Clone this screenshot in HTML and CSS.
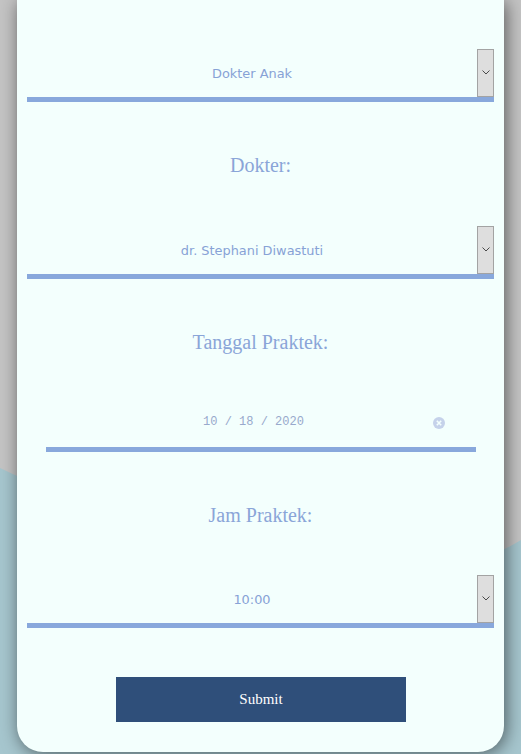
FILE: index.html
```html
<!DOCTYPE html>
<html lang="id">
<head>
<meta charset="utf-8">
<title>Form Janji Dokter</title>
<link rel="stylesheet" href="styles.css">
</head>
<body>
<div class="page">
  <form class="card">
    <div class="select">
      <span class="select-value">Dokter Anak</span>
      <span class="select-btn"><svg width="8" height="5" viewBox="0 0 8 5"><path d="M0.5 0.5 L4 4 L7.5 0.5" fill="none" stroke="#4a4a4a" stroke-width="1"/></svg></span>
    </div>

    <label class="label">Dokter:</label>
    <div class="select">
      <span class="select-value">dr. Stephani Diwastuti</span>
      <span class="select-btn"><svg width="8" height="5" viewBox="0 0 8 5"><path d="M0.5 0.5 L4 4 L7.5 0.5" fill="none" stroke="#4a4a4a" stroke-width="1"/></svg></span>
    </div>

    <label class="label">Tanggal Praktek:</label>
    <div class="date">
      <span class="date-value">10 / 18 / 2020</span>
      <span class="date-clear"><svg width="12" height="12" viewBox="0 0 12 12"><circle cx="6" cy="6" r="6" fill="#c5d2ea"/><path d="M3.8 3.8 L8.2 8.2 M8.2 3.8 L3.8 8.2" stroke="#f3fffd" stroke-width="1.6"/></svg></span>
    </div>

    <label class="label label-jam">Jam Praktek:</label>
    <div class="select">
      <span class="select-value">10:00</span>
      <span class="select-btn"><svg width="8" height="5" viewBox="0 0 8 5"><path d="M0.5 0.5 L4 4 L7.5 0.5" fill="none" stroke="#4a4a4a" stroke-width="1"/></svg></span>
    </div>

    <div class="actions">
      <button type="button" class="submit">Submit</button>
    </div>
  </form>
</div>
</body>
</html>
```

FILE: styles.css
```css
html, body {
  margin: 0;
  padding: 0;
}

body {
  width: 521px;
  height: 754px;
  overflow: hidden;
  background-color: #c4c4c4;
  background-image: url("data:image/svg+xml,%3Csvg xmlns='http://www.w3.org/2000/svg' width='521' height='754' viewBox='0 0 521 754'%3E%3Cpath d='M0 468 C150 538 370 632 521 540 L521 754 L0 754 Z' fill='%23a6c6ce'/%3E%3C/svg%3E");
  background-repeat: no-repeat;
  background-size: 521px 754px;
}

.page {
  padding-left: 17px;
}

.card {
  width: 487px;
  box-sizing: border-box;
  padding: 49px 10px 30px;
  background: #f3fffd;
  border-radius: 0 0 26px 26px;
  box-shadow: 2px 2px 18px rgba(0, 0, 0, 0.55);
  display: flex;
  flex-direction: column;
}

.select {
  display: flex;
  align-items: flex-start;
  height: 48px;
  border-bottom: 5px solid #88a8dc;
}

.select-value {
  flex: 1;
  align-self: stretch;
  display: flex;
  align-items: center;
  justify-content: center;
  font-family: "DejaVu Sans", Verdana, sans-serif;
  font-size: 12.9px;
  color: #87a2d6;
  padding-top: 1px;
}

.select-btn {
  width: 15px;
  height: 46px;
  background: #dedede;
  border: 1px solid #a3a3a3;
  display: flex;
  align-items: center;
  justify-content: center;
  box-sizing: content-box;
  padding-bottom: 0;
}

.select-btn svg {
  margin-top: -2px;
}

.label {
  display: block;
  text-align: center;
  font-family: "Liberation Serif", "Times New Roman", serif;
  font-size: 20px;
  line-height: 24px;
  color: #8aa5d8;
  margin: 51px 0 49px;
}

.label-jam {
  margin-bottom: 48px;
}

.date {
  display: flex;
  align-items: center;
  height: 48px;
  margin: -4px 18px 0 19px;
  padding-left: 28px;
  border-bottom: 5px solid #88a8dc;
}

.date-value {
  flex: 1;
  text-align: center;
  font-family: "Liberation Mono", "Courier New", monospace;
  font-size: 12px;
  color: #98a9cc;
  margin-top: -2px;
}

.date-clear {
  display: flex;
  margin-right: 31px;
}

.actions {
  display: flex;
  justify-content: center;
  margin-top: 49px;
}

.submit {
  width: 290px;
  height: 45px;
  border: none;
  background: #2f4f7a;
  color: #ffffff;
  font-family: "Liberation Serif", "Times New Roman", serif;
  font-size: 15px;
  padding: 0;
  margin-left: 1px;
}
```
